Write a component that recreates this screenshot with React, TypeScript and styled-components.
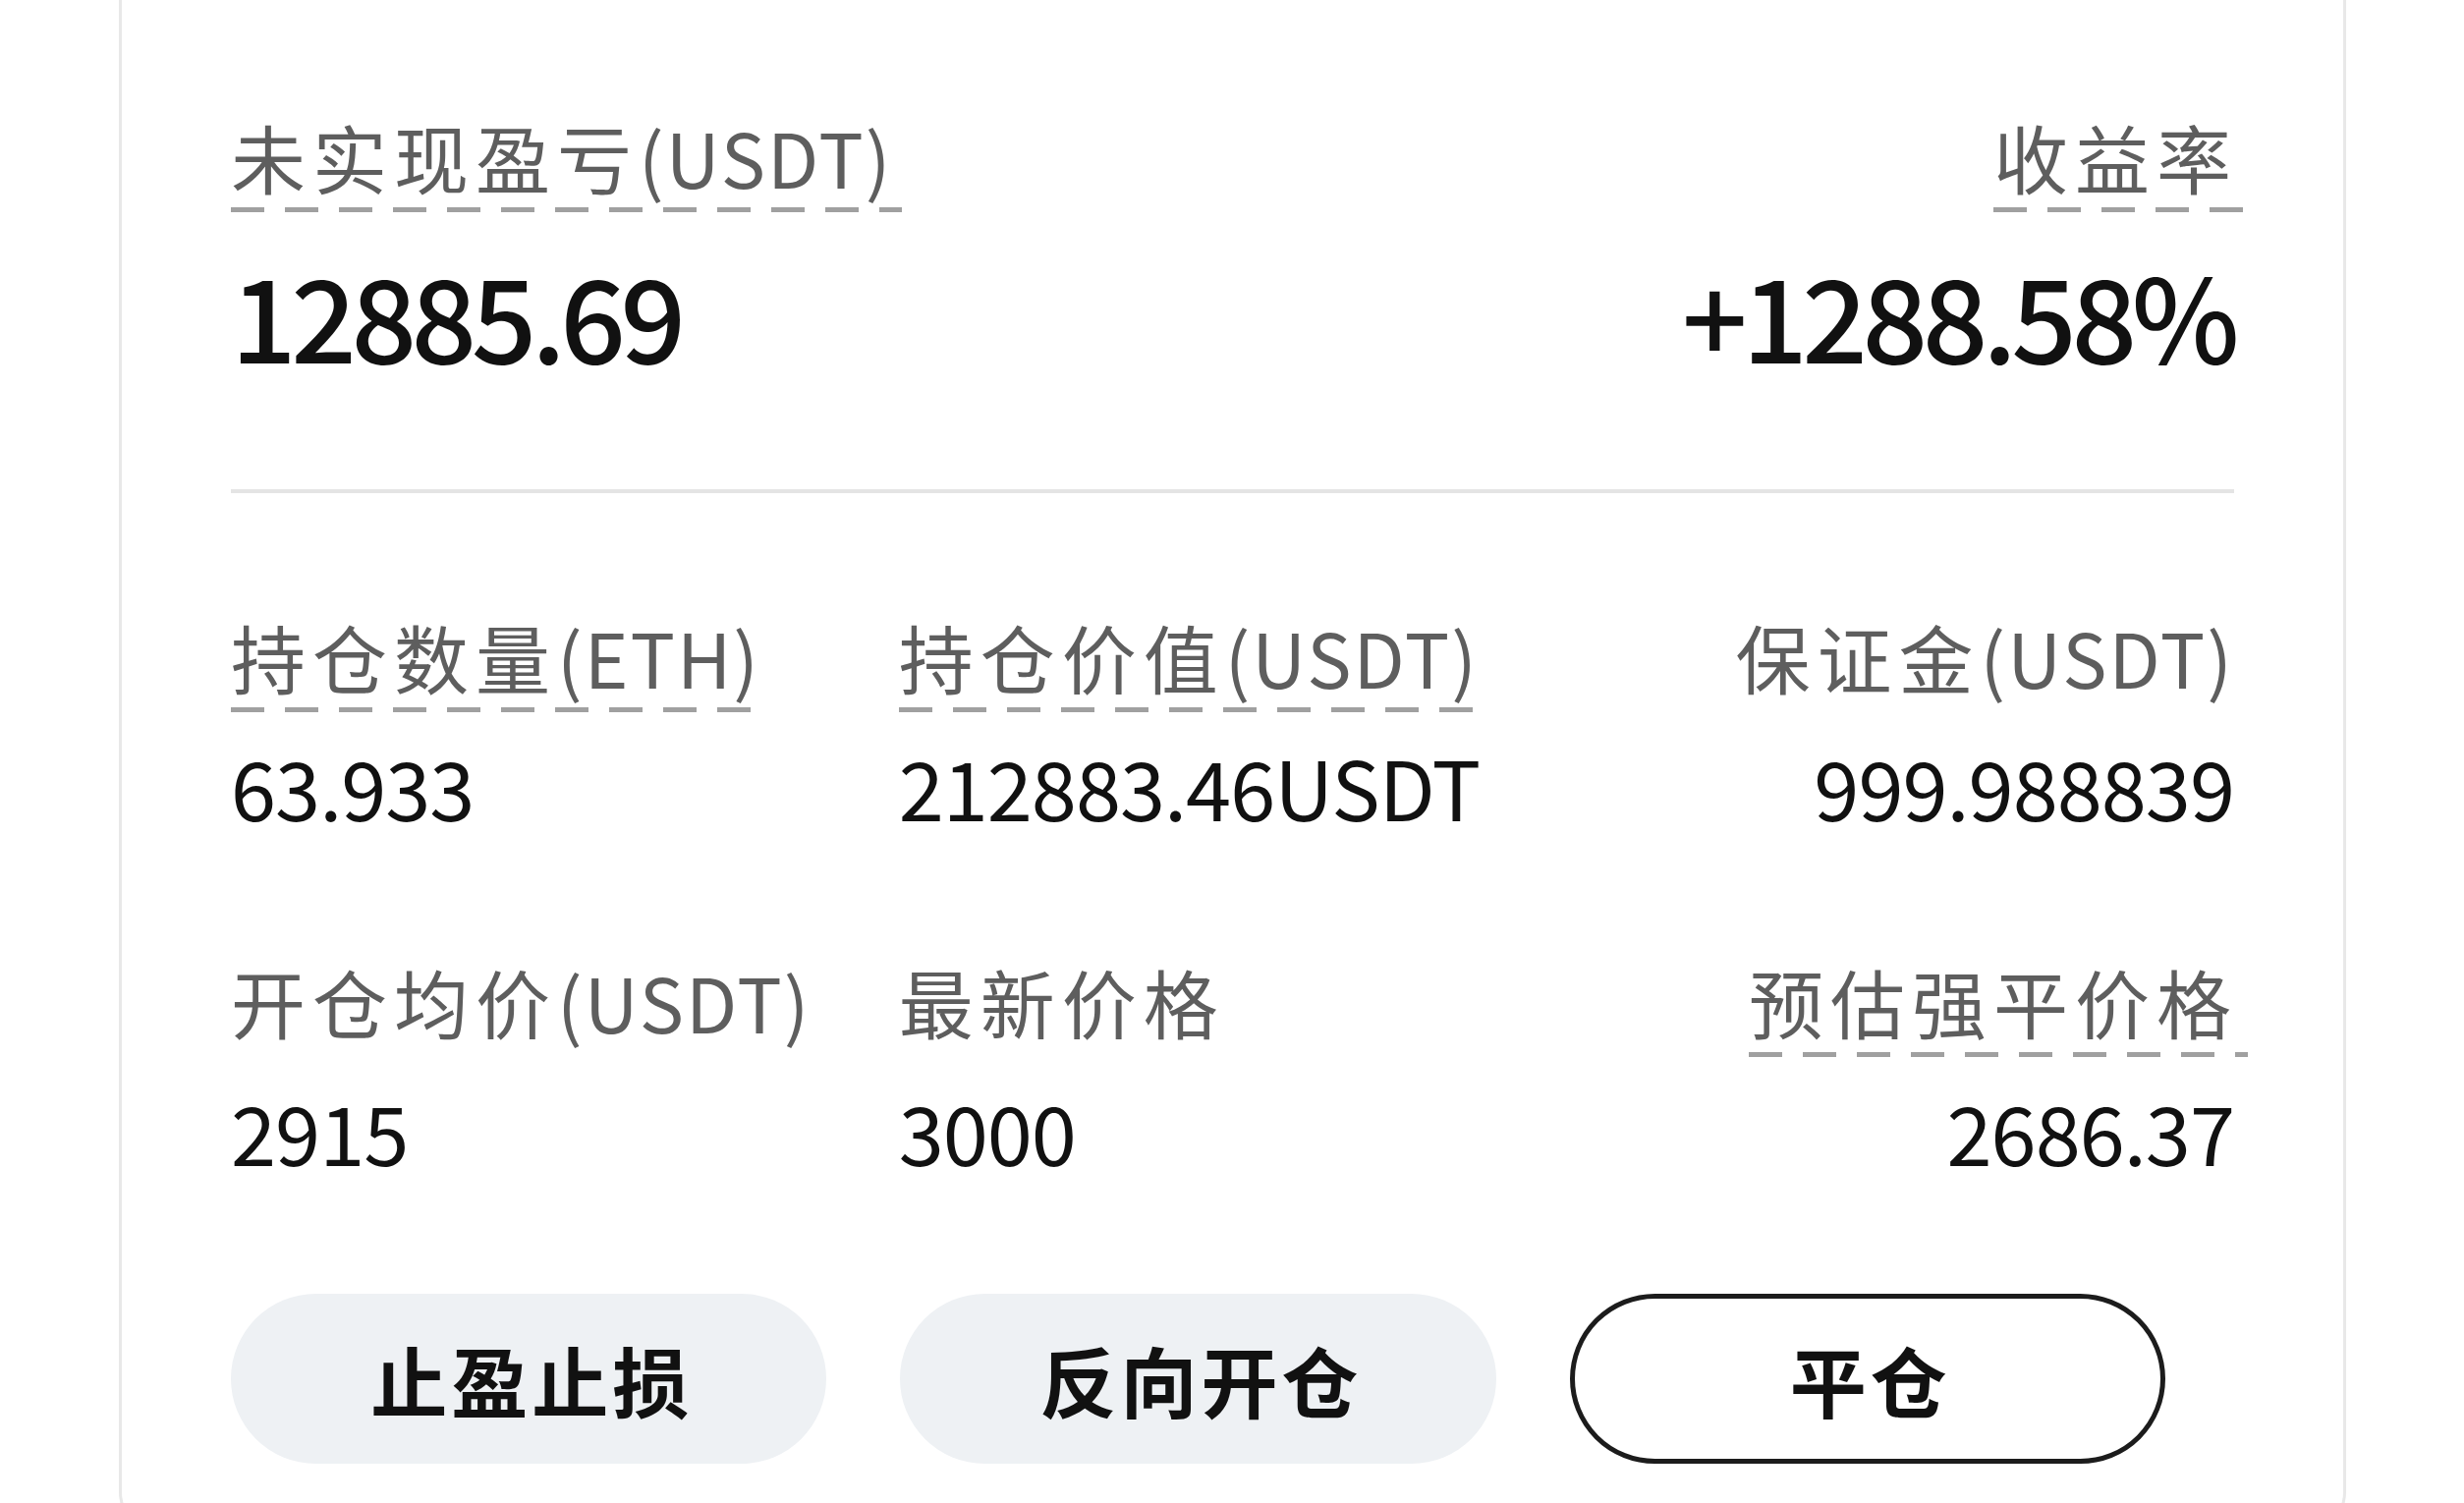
import React from 'react';
import styled, { createGlobalStyle } from 'styled-components';

const GlobalStyle = createGlobalStyle`
    html, body {
        margin: 0;
        padding: 0;
        background: #ffffff;
        overflow: hidden;
    }
    body {
        font-family: "Noto Sans CJK SC", "Noto Sans", sans-serif;
        color: #111111;
    }
`;

const Page = styled.div`
    padding-left: 121px;
`;

const Card = styled.div`
    box-sizing: border-box;
    width: 2267px;
    padding: 115px 111px 70px;
    border: 3px solid #e8e8e8;
    border-top: none;
    border-radius: 0 0 44px 44px;
    background: #ffffff;
`;

const SummaryRow = styled.div`
    display: flex;
    justify-content: space-between;
`;

const Stat = styled.div<{ $align?: 'left' | 'right'; $big?: boolean }>`
    display: flex;
    flex-direction: column;
    align-items: ${(p) => (p.$align === 'right' ? 'flex-end' : 'flex-start')};
    gap: ${(p) => (p.$big ? '45px' : '34px')};
`;

const Label = styled.span<{ $dashed?: boolean; $right?: boolean }>`
    display: inline-block;
    font-size: 76px;
    line-height: 88px;
    letter-spacing: 7px;
    color: #5e5e5e;
    white-space: nowrap;
    padding-bottom: 13px;
    padding-right: ${(p) => (p.$dashed ? '10px' : '0')};
    margin-right: ${(p) => (p.$dashed && p.$right ? '-14px' : '0')};
    background-image: ${(p) =>
        p.$dashed ? 'linear-gradient(to right, #a0a0a0 0 34px, transparent 34px 55px)' : 'none'};
    background-size: 55px 5px;
    background-repeat: repeat-x;
    background-position: left bottom;
`;

const Unit = styled.span`
    letter-spacing: 2px;
`;

const BigValue = styled.div`
    font-size: 117px;
    line-height: 117px;
    font-weight: 500;
    letter-spacing: -5.5px;
    color: #111111;
`;

const Divider = styled.hr`
    margin: 120px 0 122px;
    border: none;
    height: 4px;
    background: #e4e4e4;
`;

const DetailGrid = styled.div`
    display: grid;
    grid-template-columns: repeat(3, 1fr);
    row-gap: 133px;
`;

const Value = styled.div`
    font-size: 83px;
    line-height: 83px;
    letter-spacing: -1px;
    color: #111111;
    white-space: nowrap;
`;

const Actions = styled.div`
    display: grid;
    grid-template-columns: repeat(3, 1fr);
    column-gap: 75px;
    padding-right: 70px;
    margin-top: 124px;
`;

const ActionButton = styled.button<{ $outline?: boolean }>`
    box-sizing: border-box;
    height: 173px;
    border-radius: 87px;
    border: ${(p) => (p.$outline ? '5px solid #1c1c1c' : 'none')};
    background: ${(p) => (p.$outline ? '#ffffff' : '#eef1f4')};
    font-family: "Noto Sans CJK SC", sans-serif;
    font-size: 78px;
    font-weight: 700;
    letter-spacing: 4px;
    padding-left: 12px;
    color: #111111;
    cursor: pointer;
`;

// split "持仓价值(USDT)" into the chinese part and the unit so the unit keeps tight spacing
const LabelText = ({ text }: { text: string }) => {
    const m = text.match(/^(.*?)(\(.*\))?$/);
    return (
        <>
            {m?.[1]}
            {m?.[2] && <Unit>{m[2]}</Unit>}
        </>
    );
};

type Item = { label: string; value: string; dashed?: boolean };

const details: Item[] = [
    { label: '持仓数量(ETH)', value: '63.933', dashed: true },
    { label: '持仓价值(USDT)', value: '212883.46USDT', dashed: true },
    { label: '保证金(USDT)', value: '999.988839' },
    { label: '开仓均价(USDT)', value: '2915' },
    { label: '最新价格', value: '3000' },
    { label: '预估强平价格', value: '2686.37', dashed: true },
];

const App = () => {
    return (
        <>
            <GlobalStyle />
            <Page>
                <Card>
                    <SummaryRow>
                        <Stat $align="left" $big>
                            <Label $dashed><LabelText text="未实现盈亏(USDT)" /></Label>
                            <BigValue>12885.69</BigValue>
                        </Stat>
                        <Stat $align="right" $big>
                            <Label $dashed $right>收益率</Label>
                            <BigValue>+1288.58%</BigValue>
                        </Stat>
                    </SummaryRow>
                    <Divider />
                    <DetailGrid>
                        {details.map((d, i) => {
                            const right = i % 3 === 2;
                            return (
                                <Stat key={d.label} $align={right ? 'right' : 'left'}>
                                    <Label $dashed={d.dashed} $right={right}>
                                        <LabelText text={d.label} />
                                    </Label>
                                    <Value>{d.value}</Value>
                                </Stat>
                            );
                        })}
                    </DetailGrid>
                    <Actions>
                        <ActionButton>止盈止损</ActionButton>
                        <ActionButton>反向开仓</ActionButton>
                        <ActionButton $outline>平仓</ActionButton>
                    </Actions>
                </Card>
            </Page>
        </>
    );
};

export default App;
